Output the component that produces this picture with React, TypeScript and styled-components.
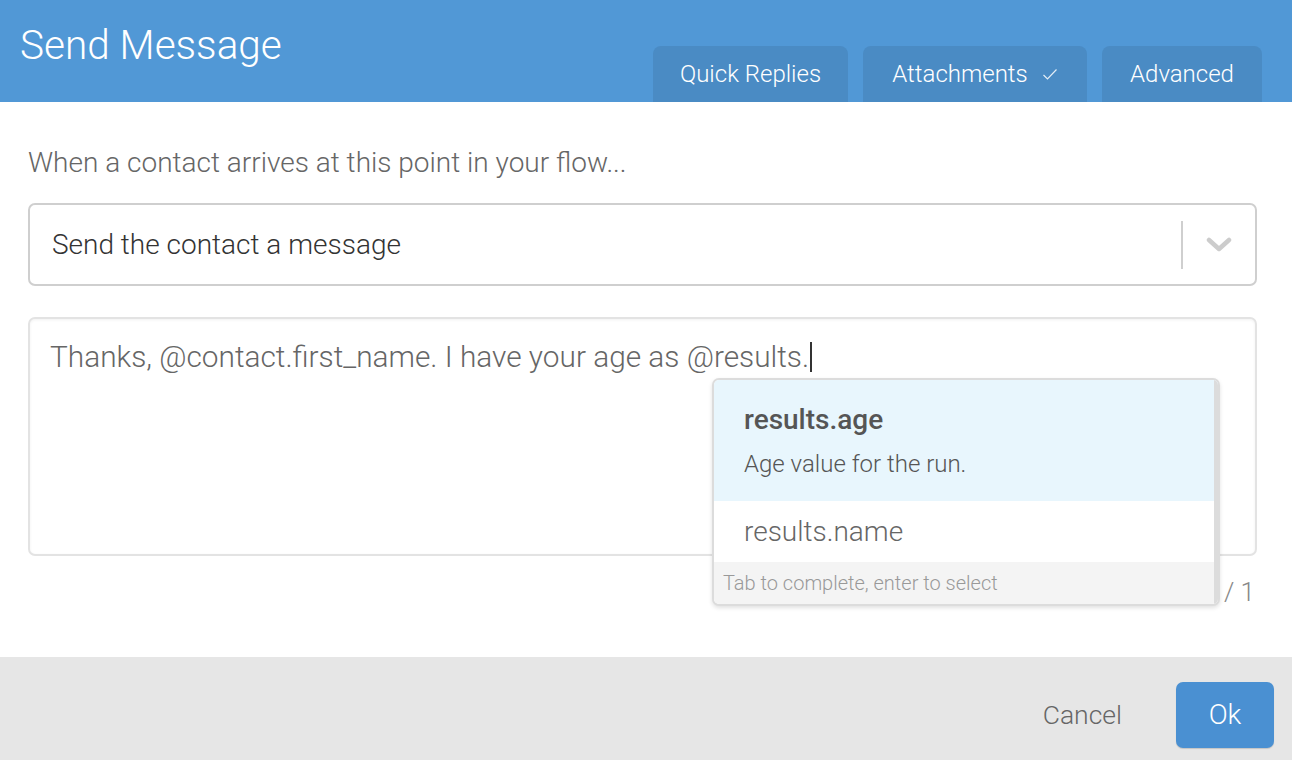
import React from "react";
import styled, { createGlobalStyle } from "styled-components";

const Global = createGlobalStyle`
  html, body { margin: 0; padding: 0; background: #fff; }
  body { font-family: Roboto, "Noto Sans", sans-serif; font-weight: 300; }
  * { box-sizing: border-box; }
`;

const Dialog = styled.div`
  width: 1292px;
  height: 760px;
  display: flex;
  flex-direction: column;
  background: #fff;
  overflow: hidden;
`;

const Header = styled.div`
  height: 102px;
  background: #5198d6;
  display: flex;
  align-items: flex-end;
  justify-content: space-between;
  padding: 0 30px 0 20px;
  flex-shrink: 0;
`;

const Title = styled.h1`
  margin: 0;
  align-self: flex-start;
  padding-top: 20px;
  color: #fff;
  font-size: 40.5px;
  line-height: 50px;
  font-weight: 300;
`;

const Tabs = styled.div`
  display: flex;
  gap: 15px;
`;

const Tab = styled.div<{ $w: number }>`
  width: ${(p) => p.$w}px;
  height: 56px;
  background: #4a8bc4;
  border-radius: 8px 8px 0 0;
  color: #fff;
  font-size: 24px;
  font-weight: 300;
  display: flex;
  align-items: center;
  justify-content: center;
  gap: 14px;
  padding-bottom: 0px;
`;

const Body = styled.div`
  flex: 1;
  padding: 0 35px 0 28px;
  display: flex;
  flex-direction: column;
`;

const Intro = styled.div`
  margin-top: 45px;
  font-size: 28px;
  color: #666;
  font-weight: 300;
  height: 32px;
  line-height: 32px;
`;

const Select = styled.div`
  margin-top: 24px;
  height: 83px;
  border: 2px solid #cfcfcf;
  border-radius: 7px;
  display: flex;
  align-items: center;
  padding-left: 22px;
`;

const SelectValue = styled.div`
  flex: 1;
  font-size: 28px;
  color: #333;
  font-weight: 300;
`;

const Separator = styled.div`
  width: 2px;
  height: 48px;
  background: #cfcfcf;
`;

const Chevron = styled.div`
  width: 72px;
  display: flex;
  justify-content: center;
  align-items: center;
`;

const EditorWrap = styled.div`
  position: relative;
  margin-top: 31px;
`;

const TextArea = styled.div`
  height: 239px;
  border: 2px solid #e3e3e3;
  border-radius: 7px;
  box-shadow: inset 0 1px 3px rgba(0, 0, 0, 0.06);
  padding: 19px 20px;
  font-size: 29.8px;
  color: #666;
  font-weight: 300;
  line-height: 38px;
  white-space: nowrap;
`;

const Caret = styled.span`
  display: inline-block;
  width: 1.5px;
  height: 30px;
  background: #333;
  vertical-align: -5px;
  margin-left: 1px;
`;

const Counter = styled.div`
  text-align: right;
  font-size: 26px;
  color: #888;
  font-weight: 300;
  margin-top: 21px;
  padding-right: 2px;
`;

const Popup = styled.div`
  position: absolute;
  left: 684px;
  top: 61px;
  width: 508px;
  border: 2px solid #dcdcdc;
  border-radius: 7px;
  background: #fff;
  overflow: hidden;
  box-shadow: 0 2px 4px rgba(0, 0, 0, 0.12);
`;

const Option = styled.div<{ $active?: boolean }>`
  background: ${(p) => (p.$active ? "#e8f6fd" : "#fff")};
  padding: ${(p) => (p.$active ? "23px 30px 22px" : "14px 30px 13px")};
  border-right: 4px solid #dcdcdc;
`;

const OptionName = styled.div<{ $bold?: boolean }>`
  font-size: 28px;
  color: ${(p) => (p.$bold ? "#555" : "#666")};
  font-weight: ${(p) => (p.$bold ? 500 : 300)};
  line-height: 34px;
`;

const OptionDesc = styled.div`
  font-size: 24px;
  color: #555;
  font-weight: 300;
  margin-top: 12px;
  line-height: 30px;
`;

const PopupFooter = styled.div`
  background: #f4f4f4;
  height: 42px;
  padding-left: 9px;
  display: flex;
  align-items: center;
  font-size: 20px;
  color: #999;
  font-weight: 300;
  border-right: 4px solid #dcdcdc;
`;

const Footer = styled.div`
  height: 103px;
  background: #e6e6e6;
  display: flex;
  align-items: center;
  justify-content: flex-end;
  padding: 12px 18px 0 0;
  gap: 54px;
  flex-shrink: 0;
`;

const CancelButton = styled.button`
  border: none;
  background: none;
  font-family: inherit;
  font-size: 26.5px;
  font-weight: 300;
  color: #666;
  padding: 0;
`;

const OkButton = styled.button`
  width: 98px;
  height: 66px;
  border: none;
  border-radius: 7px;
  background: #4a90d2;
  box-shadow: 0 1px 1px rgba(0, 0, 0, 0.15);
  color: #fff;
  font-family: inherit;
  font-size: 28px;
  font-weight: 300;
`;

export default function App() {
  return (
    <>
      <Global />
      <Dialog>
        <Header>
          <Title>Send Message</Title>
          <Tabs>
            <Tab $w={195}>Quick Replies</Tab>
            <Tab $w={224}>
              Attachments
              <svg width="16" height="13" viewBox="0 0 16 13">
                <path d="M1.5 7 L5.5 11 L14.5 1.5" fill="none" stroke="rgba(255,255,255,0.85)" strokeWidth="1.2" />
              </svg>
            </Tab>
            <Tab $w={160}>Advanced</Tab>
          </Tabs>
        </Header>
        <Body>
          <Intro>When a contact arrives at this point in your flow...</Intro>
          <Select>
            <SelectValue>Send the contact a message</SelectValue>
            <Separator />
            <Chevron>
              <svg width="26" height="16" viewBox="0 0 26 16">
                <path d="M3 3 L13 12 L23 3" fill="none" stroke="#cccccc" strokeWidth="4.5" strokeLinecap="round" strokeLinejoin="round" />
              </svg>
            </Chevron>
          </Select>
          <EditorWrap>
            <TextArea>
              Thanks, @contact.first_name. I have your age as @results.<Caret />
            </TextArea>
            <Counter>37 / 1</Counter>
            <Popup>
              <Option $active>
                <OptionName $bold>results.age</OptionName>
                <OptionDesc>Age value for the run.</OptionDesc>
              </Option>
              <Option>
                <OptionName>results.name</OptionName>
              </Option>
              <PopupFooter>Tab to complete, enter to select</PopupFooter>
            </Popup>
          </EditorWrap>
        </Body>
        <Footer>
          <CancelButton>Cancel</CancelButton>
          <OkButton>Ok</OkButton>
        </Footer>
      </Dialog>
    </>
  );
}
